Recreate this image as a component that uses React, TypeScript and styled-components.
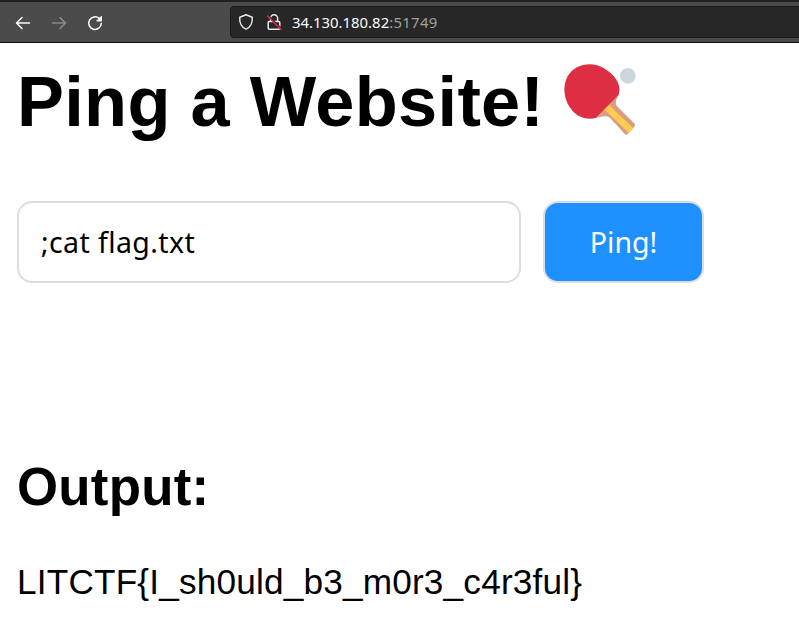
import React from 'react';
import styled, { createGlobalStyle } from 'styled-components';

const GlobalStyle = createGlobalStyle`
  * { box-sizing: border-box; }
  body {
    margin: 0;
    background: #fff;
    color: #000;
    font-family: "Liberation Sans", Arial, sans-serif;
    overflow: hidden;
  }
`;

const Toolbar = styled.header`
  display: flex;
  align-items: center;
  height: 43px;
  padding: 0 0 0 15px;
  background: #4b4b4b;
  border-top: 2px solid #202020;
  border-bottom: 1px solid #111;
`;

const NavButton = styled.button<{ $dim?: boolean }>`
  display: flex;
  width: 16px;
  height: 16px;
  margin: 1px 20px 0 0;
  padding: 0;
  border: 0;
  background: none;
  color: ${(p) => (p.$dim ? '#8b8b8b' : '#fbfbfb')};
`;

const AddressBar = styled.div`
  display: flex;
  align-items: center;
  flex: 1;
  height: 32px;
  margin: 0 -6px 0 107px;
  padding-left: 7px;
  background: #272727;
  border: 1px solid #191919;
  border-radius: 4px;
`;

const BarIcon = styled.svg`
  width: 16px;
  height: 18px;
  margin-right: 12px;
`;

const Address = styled.span`
  margin-left: -2px;
  font: 400 14.9px/20px "Noto Sans", sans-serif;
  color: #fbfbfe;
`;

const Port = styled.span`
  color: #a0a0a0;
  letter-spacing: 0.3px;
`;

const Page = styled.main`
  padding: 19px 17px 0;
`;

const Title = styled.h1`
  display: flex;
  gap: 20px;
  height: 80px;
  margin: 0;
  font-size: 70.4px;
  line-height: 80px;
  letter-spacing: 0.3px;
  white-space: nowrap;
`;

const Paddle = styled.svg`
  width: 73px;
  height: 73px;
  margin-top: 2px;
`;

const PingForm = styled.form`
  display: flex;
  gap: 22px;
  margin: 59px 0 0;
`;

const HostInput = styled.input`
  width: 504px;
  height: 82px;
  padding: 0 22px;
  border: 2px solid #ddd;
  border-radius: 15px;
  background: #fff;
  color: #000;
  font: 28.5px "Noto Sans", sans-serif;
  letter-spacing: 0.4px;
  outline: none;
`;

const Submit = styled.button`
  width: 161px;
  height: 82px;
  padding: 0;
  border: 2px solid #ddd;
  border-radius: 15px;
  background: #1e90ff;
  color: #fff;
  font: 28.5px "Noto Sans", sans-serif;
`;

const OutputTitle = styled.h2`
  margin: 174px 0 0;
  font-size: 52.8px;
  line-height: 60px;
  letter-spacing: 0.25px;
`;

const Output = styled.p`
  margin: 45px 0 0;
  font-size: 35.2px;
  line-height: 40px;
  letter-spacing: 0.18px;
`;

const line = {
  fill: 'none',
  stroke: 'currentColor',
  strokeWidth: 1.5,
  strokeLinecap: 'round' as const,
  strokeLinejoin: 'round' as const,
};

export default function App() {
  return (
    <>
      <GlobalStyle />
      <Toolbar>
        <NavButton aria-label="Back">
          <svg width="16" height="16" viewBox="0 0 16 16" {...line}>
            <path d="M14.5 8H1.8M7 2.5L1.5 8L7 13.5" />
          </svg>
        </NavButton>
        <NavButton aria-label="Forward" $dim>
          <svg width="16" height="16" viewBox="0 0 16 16" {...line}>
            <path d="M1.5 8H14.2M9 2.5L14.5 8L9 13.5" />
          </svg>
        </NavButton>
        <NavButton aria-label="Reload">
          <svg width="16" height="16" viewBox="0 0 16 16" {...line}>
            <path d="M14.3 8.2A6.3 6.3 0 1 1 12.2 3.4" />
            <path d="M14.4 1.6V6H10Z" fill="currentColor" strokeWidth="1" />
          </svg>
        </NavButton>
        <AddressBar>
          <BarIcon viewBox="0 0 16 18" color="#e8e8e8" {...line}>
            <path d="M8 1.7L14.2 4.2C14.8 9.4 12.6 14.3 8 16.1C3.4 14.3 1.2 9.4 1.8 4.2Z" />
          </BarIcon>
          <BarIcon viewBox="0 0 16 18" color="#e8e8e8" {...line}>
            <path d="M4.6 8V5.2A3.5 3.5 0 0 1 11.6 5.2V8M3.2 8.4H12.8A1 1 0 0 1 13.8 9.4V15.3A1 1 0 0 1 12.8 16.3H3.2A1 1 0 0 1 2.2 15.3V9.4A1 1 0 0 1 3.2 8.4Z" />
            <path d="M3 3.2L14.6 14.8" stroke="#272727" strokeWidth="1.5" />
            <path d="M1.6 3L14.8 16.2" stroke="#e22850" />
          </BarIcon>
          <Address>
            34.130.180.82<Port>:51749</Port>
          </Address>
        </AddressBar>
      </Toolbar>
      <Page>
        <Title>
          Ping a Website!
          <Paddle viewBox="42 42 219 219" role="img" aria-label="Table tennis paddle and ball">
            <path
              fill="#d99e82"
              d="M207 132C199 147 194 160 201 169L254 221Q257 225 254 229L232 253Q229 256 225 253L181 205C171 194 155 200 136 204L160 165Z"
            />
            <path fill="#ffcc4d" d="M162 177L176 164L250 235L237 249Z" />
            <path
              fill="#dd2e44"
              d="M137 204C112 211 85 203 66 181C43 154 35 112 53 79C73 44 119 34 155 51C188 67 217 101 206 134Z"
            />
            <circle cx="233.5" cy="77.5" r="23.5" fill="#ccd6dd" />
          </Paddle>
        </Title>
        <PingForm onSubmit={(e) => e.preventDefault()}>
          <HostInput defaultValue=";cat flag.txt" aria-label="Website" spellCheck={false} />
          <Submit type="submit">Ping!</Submit>
        </PingForm>
        <OutputTitle>Output:</OutputTitle>
        <Output>{'LITCTF{I_sh0uld_b3_m0r3_c4r3ful}'}</Output>
      </Page>
    </>
  );
}
